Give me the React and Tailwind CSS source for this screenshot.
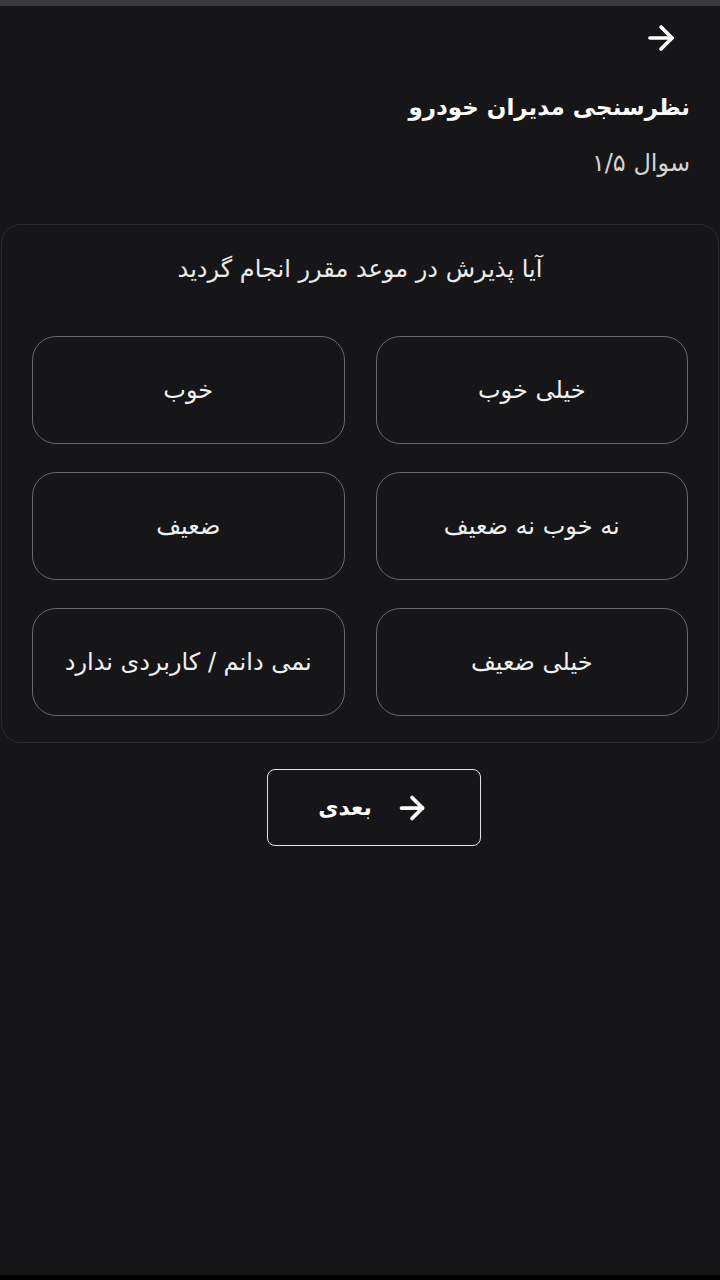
import { ArrowRight } from "lucide-react";

const options = [
  "خیلی خوب",
  "خوب",
  "نه خوب نه ضعیف",
  "ضعیف",
  "خیلی ضعیف",
  "نمی دانم / کاربردی ندارد",
];

export default function App() {
  return (
    <div
      dir="rtl"
      className="flex h-[1280px] w-[720px] flex-col bg-[#161618] text-white"
      style={{ fontFamily: '"DejaVu Sans", sans-serif' }}
    >
      <div className="h-[6px] bg-[#3b3a3c]" />

      {/* header */}
      <div className="flex pr-[40px] pt-[13px]">
        <ArrowRight className="h-[38px] w-[38px]" strokeWidth={2.3} />
      </div>

      <h1 className="mt-[33px] pr-[30px] text-[23px] font-bold leading-[34px]">
        نظرسنجی مدیران خودرو
      </h1>
      <p className="mt-[24px] pr-[30px] text-[24px] leading-[30px] text-[#d4d4d4]">
        سوال ۱/۵
      </p>

      {/* question card */}
      <div className="mx-px mt-[46px] rounded-[20px] border border-[#2b2b2e] px-[30px] pb-[26px] pt-[28px]">
        <p className="text-center text-[24px] leading-[32px] text-[#ececec]">
          آیا پذیرش در موعد مقرر انجام گردید
        </p>
        <div className="mt-[51px] grid grid-cols-2 gap-x-[31px] gap-y-[28px]">
          {options.map((o, i) => (
            <button
              key={i}
              className="flex h-[108px] items-center justify-center rounded-[24px] border-[1.5px] border-[#6a6a6c] text-[24px] text-[#f0f0f0]"
            >
              {o}
            </button>
          ))}
        </div>
      </div>

      {/* next */}
      <div className="mt-[26px] flex justify-center pl-[28px]">
        <button className="flex h-[77px] w-[214px] items-center justify-center gap-[22px] rounded-[8px] border-[1.5px] border-[#e2e2e2] text-[22px] font-bold">
          <ArrowRight className="h-[36px] w-[36px]" strokeWidth={2.5} />
          <span>بعدی</span>
        </button>
      </div>

      <div className="flex-1" />
      <div className="h-[5px] bg-black" />
    </div>
  );
}
